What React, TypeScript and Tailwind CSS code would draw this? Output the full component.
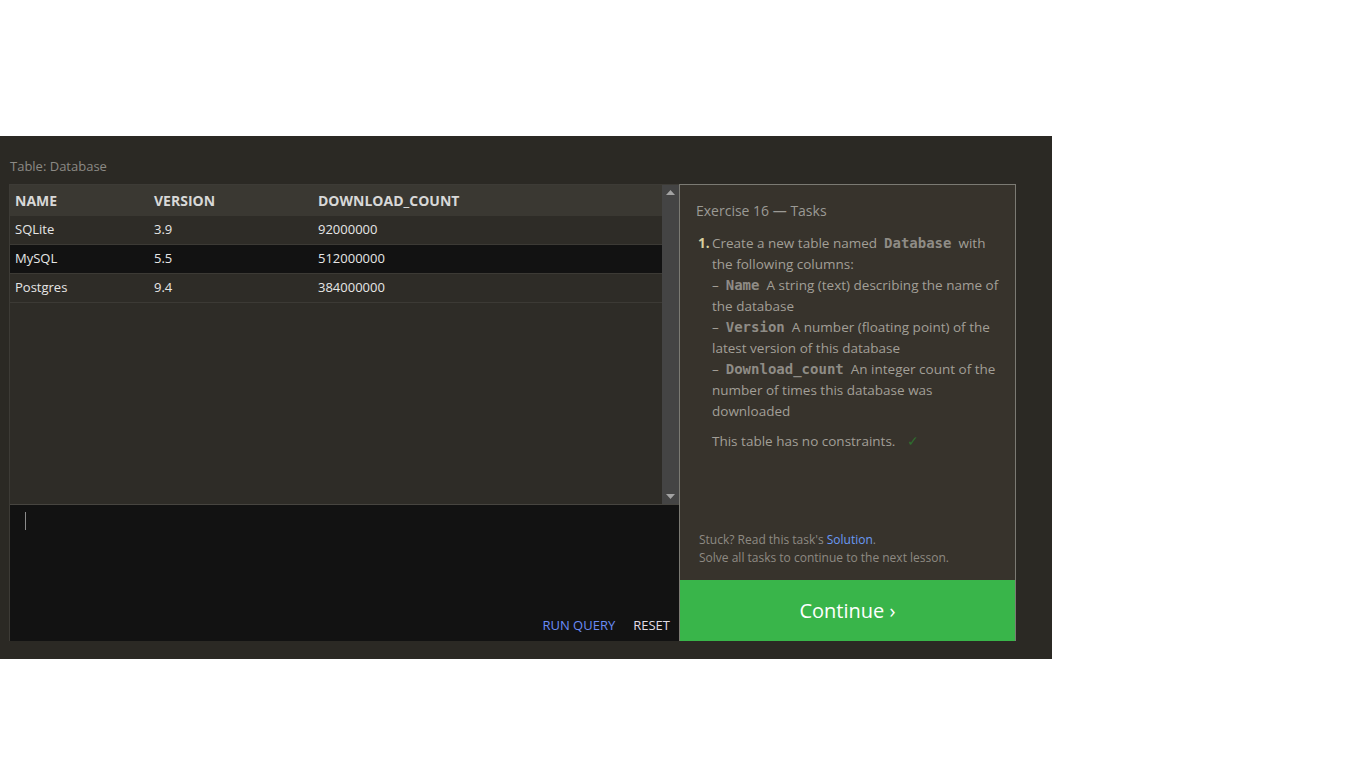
const sans = "font-['Open_Sans','Noto_Sans',sans-serif]"
const mono = "font-['DejaVu_Sans_Mono','Liberation_Mono',monospace]"

const rows = [
    { name: 'SQLite', version: '3.9', count: '92000000', dark: false },
    { name: 'MySQL', version: '5.5', count: '512000000', dark: true },
    { name: 'Postgres', version: '9.4', count: '384000000', dark: false },
]

function Code({ children }: { children: string }) {
    return <b className={`${mono} px-[7px] text-[14px] text-[#8f8c86]`}>{children}</b>
}

function ResultTable() {
    return (
        <div className="flex h-[319px]">
            <div className="flex-1 bg-[#2e2c27]">
                <div className="flex h-[31px] items-center bg-[#3a3832] text-[14px] font-bold text-[#d8d8d8]">
                    <div className="w-[139px] pl-[5px]">NAME</div>
                    <div className="w-[164px] pl-[5px]">VERSION</div>
                    <div className="flex-1 pl-[5px]">DOWNLOAD_COUNT</div>
                </div>
                {rows.map((r) => (
                    <div
                        key={r.name}
                        className={`flex h-[29px] items-center border-b border-[#3c3a35] text-[13px] text-[#e6e6e6] ${r.dark ? 'bg-[#121212]' : ''}`}
                    >
                        <div className="w-[139px] pl-[5px]">{r.name}</div>
                        <div className="w-[164px] pl-[5px]">{r.version}</div>
                        <div className="flex-1 pl-[5px]">{r.count}</div>
                    </div>
                ))}
            </div>
            <div className="flex w-[17px] flex-col items-center justify-between bg-[#444444] py-[5px]">
                <svg width="9" height="5" viewBox="0 0 9 5">
                    <path d="M4.5 0 L9 5 L0 5 Z" fill="#a3a3a3" />
                </svg>
                <svg width="9" height="5" viewBox="0 0 9 5">
                    <path d="M0 0 L9 0 L4.5 5 Z" fill="#a3a3a3" />
                </svg>
            </div>
        </div>
    )
}

function Editor() {
    return (
        <div className="flex flex-1 flex-col border-t border-[#474540] bg-[#121212]">
            <div className="ml-[15px] mt-[7px] h-[18px] w-px bg-[#8a8a8a]" />
            <div className="mt-auto flex justify-end gap-[18px] pb-[6px] pr-[9px] text-[13px]">
                <span className="text-[#6a8cf5]">RUN QUERY</span>
                <span className="text-[#e2dce6]">RESET</span>
            </div>
        </div>
    )
}

function TaskPanel() {
    return (
        <div className="flex w-[337px] flex-col border-x border-t border-[#7b7a73] bg-[#37332c]">
            <div className="px-[16px] pt-[16px]">
                <div className="text-[14px] leading-[20px] text-[#9b9a95]">Exercise 16 — Tasks</div>
                <div className="mt-[12px] flex text-[13.5px] leading-[21px] text-[#a29f97]">
                    <span className="w-[16px] pl-[2px] font-bold text-[#d8cf9e]">1.</span>
                    <div className="flex-1">
                        <div>
                            Create a new table named<Code>Database</Code>with the following columns:
                        </div>
                        <div>
                            –<Code>Name</Code>A string (text) describing the name of the database
                        </div>
                        <div>
                            –<Code>Version</Code>A number (floating point) of the latest version of this database
                        </div>
                        <div>
                            –<Code>Download_count</Code>An integer count of the number of times this database was
                            downloaded
                        </div>
                        <div className="mt-[9px]">
                            This table has no constraints.
                            <span className="ml-[12px] text-[#2f6f2f]">✓</span>
                        </div>
                    </div>
                </div>
            </div>
            <div className="mt-auto px-[19px] pb-[13px] text-[12px] leading-[18px] text-[#8e8a83]">
                <div>
                    Stuck? Read this task's <span className="text-[#6a9af5]">Solution</span>.
                </div>
                <div>Solve all tasks to continue to the next lesson.</div>
            </div>
            <button className="flex h-[61px] items-center justify-center bg-[#39b54a] text-[20px] text-white">
                Continue ›
            </button>
        </div>
    )
}

export default function App() {
    return (
        <div className={`${sans} min-h-screen bg-white`}>
            <div className="h-[136px]" />
            <div className="h-[523px] w-[1052px] bg-[#2b2924] pl-[9px] pt-[20px]">
                <div className="mb-[8px] h-[20px] text-[13px] leading-[20px] text-[#8c8a85]">
                    <span className="pl-px">Table: Database</span>
                </div>
                <div className="flex h-[457px]">
                    <div className="flex w-[670px] flex-col border-l border-t border-[#3d3b36]">
                        <ResultTable />
                        <Editor />
                    </div>
                    <TaskPanel />
                </div>
            </div>
        </div>
    )
}
